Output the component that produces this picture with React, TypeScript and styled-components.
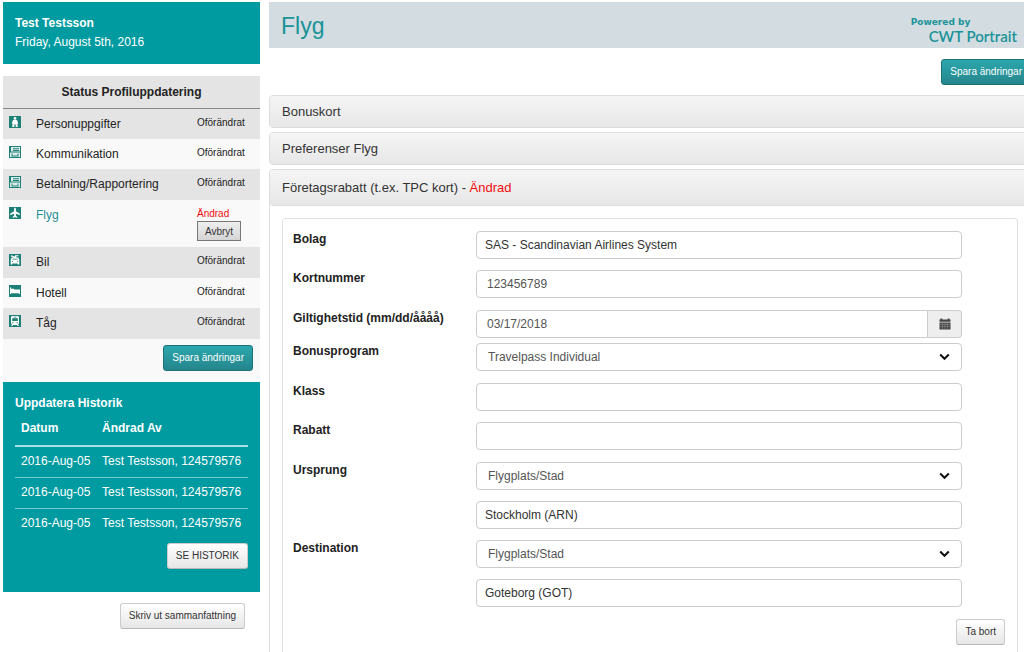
import React from "react";
import styled, { createGlobalStyle, css } from "styled-components";

const teal = "#009ba1";
const font = '"Liberation Sans", Arial, sans-serif';

const GlobalStyle = createGlobalStyle`
  *, *::before, *::after { box-sizing: border-box; }
  body {
    margin: 0;
    background: #fff;
    color: #222;
    font: 12px/16px ${font};
    overflow-x: hidden;
  }
  button, input, select { font-family: ${font}; }
`;

const Page = styled.div`
  display: grid;
  grid-template-columns: 257px minmax(0, 1fr);
  column-gap: 9px;
  min-height: 100vh;
  padding: 2px 0 0 3px;
  overflow: hidden;
`;

const Sidebar = styled.aside`
  display: flex;
  flex-direction: column;
`;

const UserCard = styled.section`
  height: 62px;
  margin-bottom: 12px;
  padding: 12px;
  background: ${teal};
  color: #fff;
  line-height: 19px;
`;

const UserName = styled.strong`
  display: block;
`;

const StatusTable = styled.table`
  width: 100%;
  table-layout: fixed;
  border-collapse: collapse;
  background: #f9f9f9;
`;

const StatusCaption = styled.th`
  height: 32px;
  padding: 0;
  background: #e4e4e4;
  border-bottom: 1px solid #888;
  color: #222;
`;

const StatusRow = styled.tr<{ $shaded: boolean }>`
  height: ${(p) => (p.$shaded ? 31 : 30)}px;
  background: ${(p) => (p.$shaded ? "#e4e4e4" : "#f9f9f9")};
`;

const IconCell = styled.td`
  width: 33px;
  padding: 7px 0 0 6px;
  vertical-align: top;
  svg { display: block; }
`;

const NameCell = styled.td`
  padding: 7px 0 0;
  vertical-align: top;
  line-height: 16px;
`;

const NameLink = styled.a<{ $active?: boolean }>`
  color: ${(p) => (p.$active ? "#1f9298" : "#222")};
  text-decoration: none;
`;

const StateCell = styled.td`
  width: 64px;
  padding: 6px 0 0;
  vertical-align: top;
  font-size: 10px;
  line-height: 15px;
`;

const Changed = styled.span`
  color: #f00d0d;
`;

const buttonBase = css`
  height: 26px;
  padding: 0 8px;
  border-radius: 3px;
  font-size: 10px;
  line-height: 24px;
  white-space: nowrap;
`;

const PrimaryButton = styled.button`
  ${buttonBase}
  border: 1px solid #1b7379;
  background: linear-gradient(#2ba7ad, #25868c);
  color: #fff;
`;

const LightButton = styled.button`
  ${buttonBase}
  border: 1px solid #ccc;
  border-bottom-color: #b8b8b8;
  background: linear-gradient(#fff, #e6e6e6);
  color: #333;
`;

const CancelButton = styled.button`
  display: block;
  width: 44px;
  height: 20px;
  margin-bottom: 6px;
  padding: 0;
  border: 1px solid #777;
  background: linear-gradient(#eee, #d5d5d5);
  color: #333;
  font-size: 10px;
`;

const SidebarActions = styled.div`
  display: flex;
  justify-content: flex-end;
  height: 43px;
  padding: 6px 7px 0 0;
  background: #f9f9f9;
`;

const History = styled.section`
  display: flex;
  flex-direction: column;
  padding: 13px 12px 23px;
  background: ${teal};
  color: #fff;
`;

const HistoryTitle = styled.h2`
  margin: 0;
  font-size: 12px;
  line-height: 17px;
`;

const HistoryTable = styled.table`
  width: 100%;
  margin-bottom: 3px;
  border-collapse: separate;
  border-spacing: 0;
  text-align: left;
  white-space: nowrap;
  th, td { padding: 0 0 2px 6px; }
  th { height: 35px; border-bottom: 2px solid #a6e0e2; }
  td { height: 31px; border-bottom: 1px solid #72cbcf; }
  tr:last-child td { border-bottom-color: transparent; }
  th:first-child { width: 81px; }
`;

const HistoryAction = styled.div`
  display: flex;
  justify-content: flex-end;
`;

const PrintAction = styled.div`
  display: flex;
  justify-content: flex-end;
  padding: 11px 15px 0 0;
`;

const Main = styled.main`
  display: flex;
  flex-direction: column;
  margin-right: -7px;
`;

const TitleBar = styled.header`
  display: flex;
  justify-content: space-between;
  height: 46px;
  padding: 0 14px 0 12px;
  background: #d2dce1;
  color: #1a9398;
`;

const PageTitle = styled.h1`
  margin: 0;
  font-size: 23px;
  font-weight: 400;
  line-height: 48px;
`;

const Brand = styled.div`
  display: flex;
  flex-direction: column;
  padding-top: 15px;
  white-space: nowrap;
`;

const BrandSmall = styled.span`
  font: bold 9px/10px "DejaVu Sans", sans-serif;
`;

const BrandLarge = styled.span`
  padding-left: 18px;
  font: 600 15px/18px Lato, sans-serif;
`;

const MainActions = styled.div`
  display: flex;
  justify-content: flex-end;
  padding: 11px 0 10px;
`;

const Accordion = styled.div`
  display: flex;
  flex: 1;
  flex-direction: column;
  gap: 4px;
`;

const Panel = styled.section<{ $open?: boolean }>`
  display: flex;
  flex-direction: column;
  flex: ${(p) => (p.$open ? "1" : "none")};
  border: 1px solid #ddd;
  border-radius: 4px;
`;

const PanelHeader = styled.button<{ $open?: boolean }>`
  height: ${(p) => (p.$open ? 36 : 31)}px;
  padding: 0 12px;
  border: 0;
  border-bottom: ${(p) => (p.$open ? "1px solid #ddd" : "0")};
  border-radius: 3px;
  background: linear-gradient(#f5f5f5, #e7e7e7);
  color: #333;
  font-size: 13px;
  text-align: left;
`;

const CardForm = styled.form`
  flex: 1;
  margin: 12px 12px 0;
  padding: 12px 12px 16px 10px;
  border: 1px solid #e2e2e2;
  border-bottom: 0;
  border-radius: 4px 4px 0 0;
`;

const FormRow = styled.div<{ $gap: number }>`
  display: grid;
  grid-template-columns: 183px minmax(0, 1fr);
  align-items: start;
  margin: 0 43px ${(p) => p.$gap}px 0;
`;

const Label = styled.label`
  font-weight: 700;
  line-height: 16px;
  color: #222;
`;

const FieldStack = styled.div`
  display: grid;
  gap: 11px;
`;

const fieldBase = css`
  display: block;
  width: 100%;
  height: 28px;
  border: 1px solid #ccc;
  border-radius: 4px;
  background: #fff;
  font-size: 12px;
`;

const TextInput = styled.input<{ $dark?: boolean }>`
  ${fieldBase}
  padding: 0 ${(p) => (p.$dark ? 8 : 10)}px;
  color: ${(p) => (p.$dark ? "#333" : "#555")};
`;

const SelectWrap = styled.div`
  position: relative;
  svg {
    position: absolute;
    top: 10px;
    right: 12px;
    pointer-events: none;
  }
`;

const Select = styled.select`
  ${fieldBase}
  appearance: none;
  padding: 0 28px 0 11px;
  color: #555;
`;

const DateGroup = styled.div`
  display: flex;
  ${TextInput} { border-radius: 4px 0 0 4px; }
`;

const DateButton = styled.button`
  display: grid;
  flex: none;
  place-items: center;
  width: 34px;
  height: 28px;
  padding: 0;
  border: 1px solid #ccc;
  border-left: 0;
  border-radius: 0 4px 4px 0;
  background: #eee;
`;

const FormActions = styled.div`
  display: flex;
  justify-content: flex-end;
`;

type IconName = "person" | "form" | "plane" | "car" | "bed" | "train";

const glyphs: Record<IconName, React.ReactNode> = {
  person: (
    <g fill="#fff">
      <circle cx="6" cy="2.4" r="1.4" />
      <path d="M4 4h4l1.300 3.500-.9.300L8.800 11H6.700V8.500H5.300V11H3.200l.4-3.200-.9-.3z" />
    </g>
  ),
  form: (
    <g fill="#fff">
      <path d="M2 1h9v4.5H2z M1 6.500h10V11H1z" opacity=".85" />
      <path d="M4 2.200h6v1H4z M4 4.100h6v.9H4z M2.500 7.400h1v2h5v-2h1v3h-7z" fill="#1c8077" />
    </g>
  ),
  plane: (
    <path d="M6 .8c.6 0 .9.6.9 1.3v2.100l4 2.500v1.200l-4-1.100v2l1.500 1.100v.9L6 10.200l-2.400.6v-.9l1.500-1.100v-2l-4 1.100V6.700l4-2.500V2.100C5.100 1.400 5.400.8 6 .8z" fill="#fff" />
  ),
  car: (
    <g fill="#fff">
      <path d="M2.200 1.200h1.300v1h2.500v-1h3.500v1.100H7.300v1.200h2l1 2.200v4.800H8.700v-1H3.300v1H1.700V5.700l1-2.200h1.200v-.6H2.200z" />
      <path d="M3.600 4.700h4.800l.3.900H3.300z M2.800 7.200h1.200v.8H2.800z M8 7.200h1.200v.8H8z" fill="#1c8077" />
    </g>
  ),
  bed: (
    <path d="M1 2.500h1v1.200h2.500l.8.800H11V9H9.900V8.200H2V9H1z" fill="#fff" />
  ),
  train: (
    <g fill="#fff">
      <path d="M3 1h6l1 1v6.500l-1 .8 1 1.700H8.600L8 9.900H4L3.400 11H2l1-1.700-1-.8V2z" />
      <path d="M4.500 1.700h3v.7h-3z M3.200 3.300h5.600V6H3.200z M3.200 7.200h1.300v1H3.200z M7.500 7.200h1.300v1H7.500z" fill="#1c8077" />
    </g>
  ),
};

const StatusIcon = ({ name }: { name: IconName }) => (
  <svg width="12" height="12" viewBox="0 0 12 12" aria-hidden="true">
    <rect width="12" height="12" fill="#1c8077" />
    {glyphs[name]}
  </svg>
);

const Chevron = () => (
  <svg width="11" height="8" viewBox="0 0 11 8" aria-hidden="true">
    <path d="M1.200 1.500 5.500 5.800 9.800 1.500" fill="none" stroke="#111" strokeWidth="2" />
  </svg>
);

const Calendar = () => (
  <svg width="12" height="12" viewBox="0 0 12 12" aria-hidden="true">
    <path d="M.5 1.500h1V.5h1.800v1h5.400v-1h1.800v1h1v2.300H.5z M.5 4.600h11v6.900H.5z" fill="#444" />
    <path d="M1 6.500h10M1 8.500h10M3.500 5v6M6 5v6M8.500 5v6" stroke="#999" strokeWidth=".5" />
  </svg>
);

const statuses: { icon: IconName; name: string; changed?: boolean }[] = [
  { icon: "person", name: "Personuppgifter" },
  { icon: "form", name: "Kommunikation" },
  { icon: "form", name: "Betalning/Rapportering" },
  { icon: "plane", name: "Flyg", changed: true },
  { icon: "car", name: "Bil" },
  { icon: "bed", name: "Hotell" },
  { icon: "train", name: "Tåg" },
];

const history = [1, 2, 3].map((id) => ({
  id,
  date: "2016-Aug-05",
  by: "Test Testsson, 124579576",
}));

const PlaceFields = ({ id, place }: { id: string; place: string }) => (
  <FieldStack>
    <SelectWrap>
      <Select id={id}>
        <option>Flygplats/Stad</option>
      </Select>
      <Chevron />
    </SelectWrap>
    <TextInput $dark aria-label={`${id} plats`} defaultValue={place} />
  </FieldStack>
);

const IconCol = styled.col`
  width: 33px;
`;

const StateCol = styled.col`
  width: 63px;
`;

export default function App() {
  return (
    <>
      <GlobalStyle />
      <Page>
        <Sidebar>
          <UserCard>
            <UserName>Test Testsson</UserName>
            Friday, August 5th, 2016
          </UserCard>

          <StatusTable>
            <colgroup>
              <IconCol />
              <col />
              <StateCol />
            </colgroup>
            <thead>
              <tr>
                <StatusCaption colSpan={3}>Status Profiluppdatering</StatusCaption>
              </tr>
            </thead>
            <tbody>
              {statuses.map((s, i) => (
                <StatusRow key={s.name} $shaded={i % 2 === 0}>
                  <IconCell>
                    <StatusIcon name={s.icon} />
                  </IconCell>
                  <NameCell>
                    <NameLink href="#" $active={s.changed}>{s.name}</NameLink>
                  </NameCell>
                  <StateCell>
                    {s.changed ? (
                      <>
                        <Changed>Ändrad</Changed>
                        <CancelButton type="button">Avbryt</CancelButton>
                      </>
                    ) : (
                      "Oförändrat"
                    )}
                  </StateCell>
                </StatusRow>
              ))}
            </tbody>
          </StatusTable>
          <SidebarActions>
            <PrimaryButton type="button">Spara ändringar</PrimaryButton>
          </SidebarActions>

          <History>
            <HistoryTitle>Uppdatera Historik</HistoryTitle>
            <HistoryTable>
              <thead>
                <tr>
                  <th>Datum</th>
                  <th>Ändrad Av</th>
                </tr>
              </thead>
              <tbody>
                {history.map((h) => (
                  <tr key={h.id}>
                    <td>{h.date}</td>
                    <td>{h.by}</td>
                  </tr>
                ))}
              </tbody>
            </HistoryTable>
            <HistoryAction>
              <LightButton type="button">SE HISTORIK</LightButton>
            </HistoryAction>
          </History>

          <PrintAction>
            <LightButton type="button">Skriv ut sammanfattning</LightButton>
          </PrintAction>
        </Sidebar>

        <Main>
          <TitleBar>
            <PageTitle>Flyg</PageTitle>
            <Brand>
              <BrandSmall>Powered by</BrandSmall>
              <BrandLarge>CWT Portrait</BrandLarge>
            </Brand>
          </TitleBar>
          <MainActions>
            <PrimaryButton type="button">Spara ändringar</PrimaryButton>
          </MainActions>

          <Accordion>
            <Panel>
              <PanelHeader type="button">Bonuskort</PanelHeader>
            </Panel>
            <Panel>
              <PanelHeader type="button">Preferenser Flyg</PanelHeader>
            </Panel>
            <Panel $open>
              <PanelHeader type="button" $open aria-expanded="true">
                Företagsrabatt (t.ex. TPC kort) - <Changed>Ändrad</Changed>
              </PanelHeader>
              <CardForm>
                <FormRow $gap={11}>
                  <Label htmlFor="bolag">Bolag</Label>
                  <TextInput $dark id="bolag" defaultValue="SAS - Scandinavian Airlines System" />
                </FormRow>
                <FormRow $gap={12}>
                  <Label htmlFor="kortnummer">Kortnummer</Label>
                  <TextInput id="kortnummer" defaultValue="123456789" />
                </FormRow>
                <FormRow $gap={5}>
                  <Label htmlFor="giltighetstid">Giltighetstid (mm/dd/åååå)</Label>
                  <DateGroup>
                    <TextInput id="giltighetstid" defaultValue="03/17/2018" />
                    <DateButton type="button" aria-label="Välj datum">
                      <Calendar />
                    </DateButton>
                  </DateGroup>
                </FormRow>
                <FormRow $gap={12}>
                  <Label htmlFor="bonusprogram">Bonusprogram</Label>
                  <SelectWrap>
                    <Select id="bonusprogram">
                      <option>Travelpass Individual</option>
                    </Select>
                    <Chevron />
                  </SelectWrap>
                </FormRow>
                <FormRow $gap={11}>
                  <Label htmlFor="klass">Klass</Label>
                  <TextInput id="klass" />
                </FormRow>
                <FormRow $gap={12}>
                  <Label htmlFor="rabatt">Rabatt</Label>
                  <TextInput id="rabatt" />
                </FormRow>
                <FormRow $gap={11}>
                  <Label htmlFor="ursprung">Ursprung</Label>
                  <PlaceFields id="ursprung" place="Stockholm (ARN)" />
                </FormRow>
                <FormRow $gap={12}>
                  <Label htmlFor="destination">Destination</Label>
                  <PlaceFields id="destination" place="Goteborg (GOT)" />
                </FormRow>
                <FormActions>
                  <LightButton type="button">Ta bort</LightButton>
                </FormActions>
              </CardForm>
            </Panel>
          </Accordion>
        </Main>
      </Page>
    </>
  );
}
